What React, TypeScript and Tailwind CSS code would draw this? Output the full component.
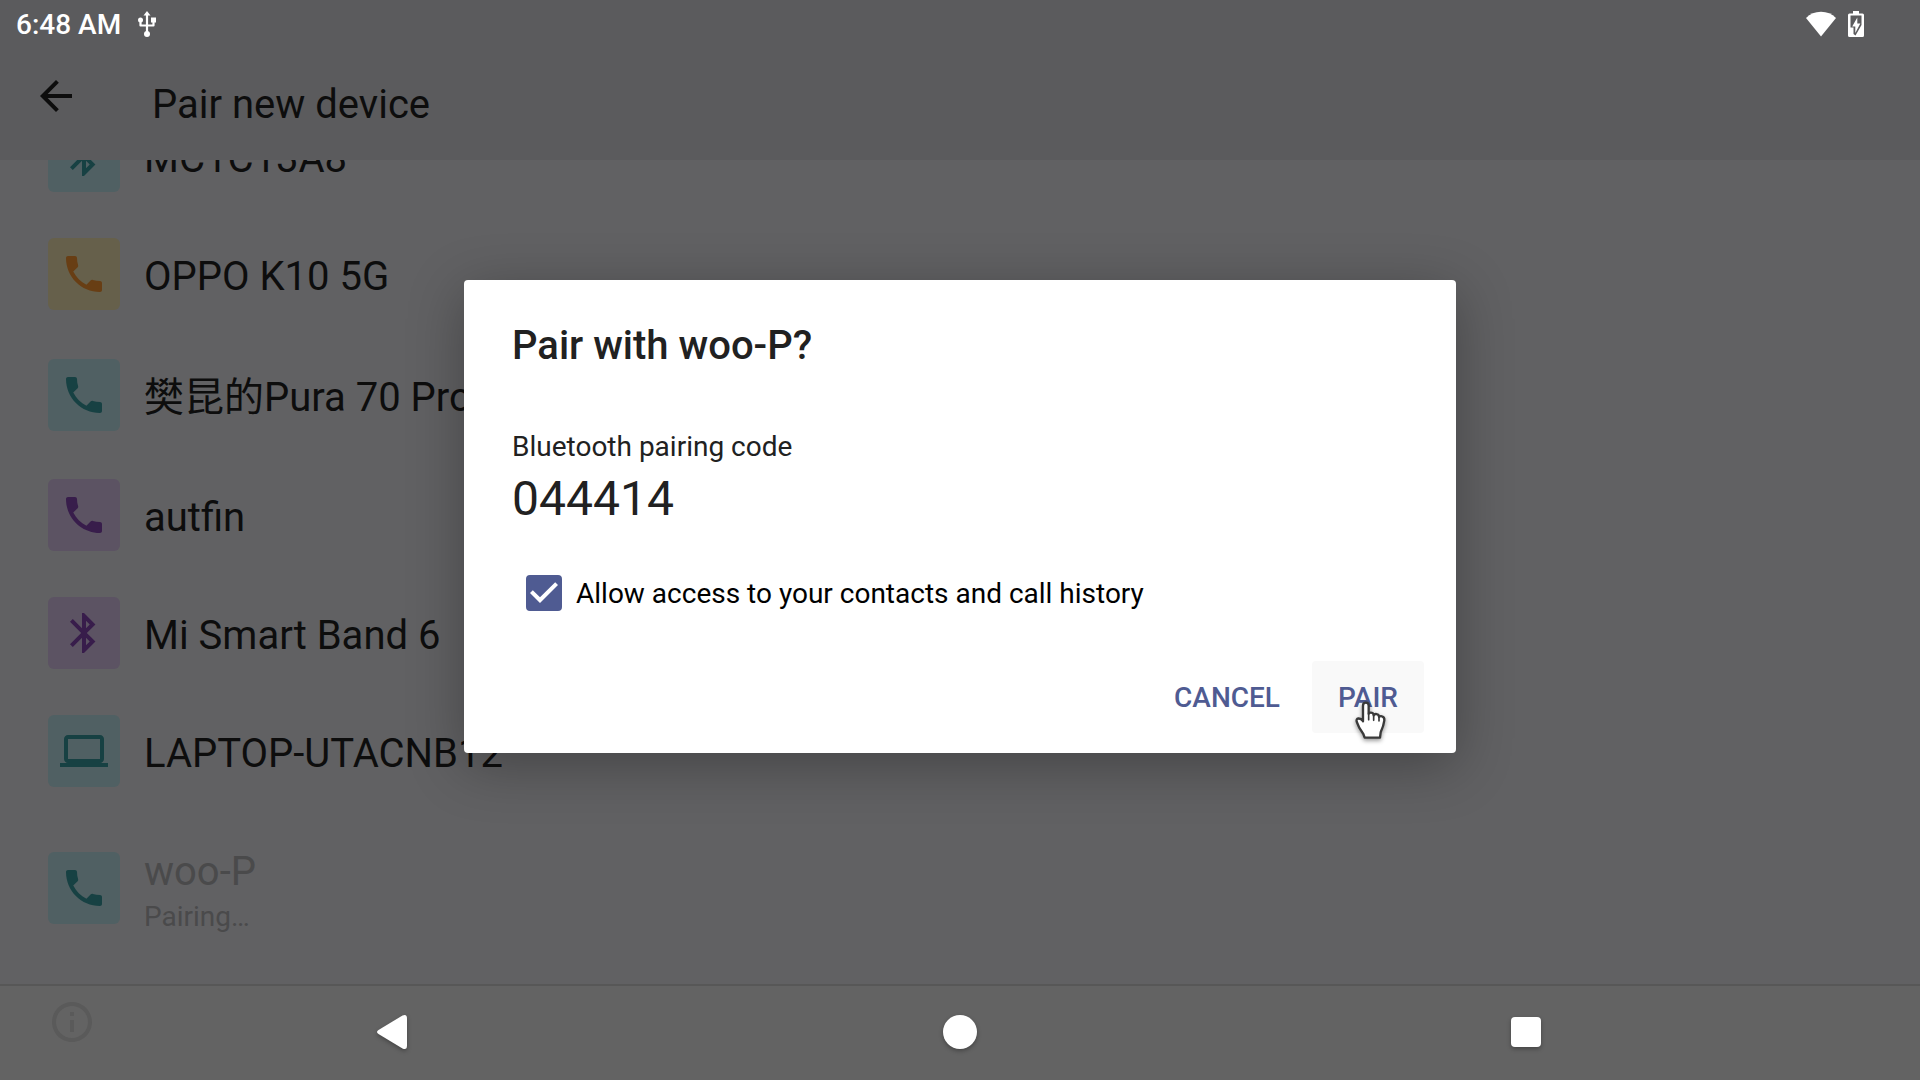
import { useState } from "react";
import type { ReactNode } from "react";
import {
  MdArrowBack,
  MdBluetooth,
  MdInfoOutline,
  MdLaptop,
  MdPhone,
} from "react-icons/md";

type Tone = "teal" | "amber" | "purple";
type Device = {
  name: string;
  kind: "phone" | "bluetooth" | "laptop";
  tone: Tone;
  status?: string;
  cjk?: boolean;
};

const devices: Device[] = [
  { name: "MC1C13A8", kind: "bluetooth", tone: "teal" },
  { name: "OPPO K10 5G", kind: "phone", tone: "amber" },
  { name: "樊昆的Pura 70 Pro", kind: "phone", tone: "teal", cjk: true },
  { name: "autfin", kind: "phone", tone: "purple" },
  { name: "Mi Smart Band 6", kind: "bluetooth", tone: "purple" },
  { name: "LAPTOP-UTACNB12", kind: "laptop", tone: "teal" },
  { name: "woo-P", kind: "phone", tone: "teal", status: "Pairing…" },
];

const tones: Record<Tone, string> = {
  teal: "bg-[#506063] text-[#174143]",
  amber: "bg-[#66604b] text-[#683e14]",
  purple: "bg-[#5c5363] text-[#381d4b]",
};

const icons: Record<Device["kind"], ReactNode> = {
  phone: <MdPhone className="size-12" />,
  bluetooth: <MdBluetooth className="size-12" />,
  laptop: <MdLaptop className="size-12" />,
};

function rowHeight(d: Device) {
  if (d.status) return "h-[156px]";
  return d.cjk ? "h-[123px]" : "h-[118px]";
}

function DeviceRow({ device }: { device: Device }) {
  const pending = Boolean(device.status);
  return (
    <li>
      <button
        type="button"
        disabled={pending}
        className={`flex w-full items-center gap-6 px-12 text-left ${rowHeight(device)}`}
      >
        <span
          className={`flex size-[72px] shrink-0 items-center justify-center rounded-md ${tones[device.tone]}`}
        >
          {icons[device.kind]}
        </span>
        <span className={`flex flex-col pt-1.5 ${pending ? "text-[#4a4a4b]" : "text-[#0d0d0d]"}`}>
          <span className="text-[40px] leading-[48px] whitespace-nowrap">{device.name}</span>
          {device.status && (
            <span className="mt-1 text-[28px] leading-[34px]">{device.status}</span>
          )}
        </span>
      </button>
    </li>
  );
}

function StatusBar() {
  return (
    <div className="flex h-12 items-center justify-between bg-[#5b5b5d] pr-14 pl-4 text-white">
      <div className="flex items-center gap-4">
        <time className="pt-0.5 text-[28px] leading-[34px] font-medium">6:48 AM</time>
        <svg width="20" height="26" viewBox="0 0 20 26" fill="#fff" aria-label="USB connected">
          <path d="M10 0 6.500 4.500h7Z" />
          <path
            d="M10 3v20M3.500 9v5.500h13V9"
            fill="none"
            stroke="#fff"
            strokeWidth="2.200"
            strokeLinejoin="round"
          />
          <circle cx="3.500" cy="9" r="2.500" />
          <rect x="14" y="6.500" width="5" height="5" />
          <circle cx="10" cy="23" r="3" />
        </svg>
      </div>
      <div className="flex items-center gap-3">
        <svg width="30" height="26" viewBox="0 0 30 26" fill="currentColor" aria-label="Wi-Fi">
          <path d="M15 25.5 0 7C4 3 9 .8 15 .8S26 3 30 7Z" />
        </svg>
        <svg width="16" height="26" viewBox="0 0 16 26" aria-label="Battery charging">
          <path
            d="M5 0h6v2.5h3.5A1.5 1.5 0 0 1 16 4v20.500a1.500 1.500 0 0 1-1.500 1.500h-13A1.500 1.500 0 0 1 0 24.500V4a1.500 1.500 0 0 1 1.500-1.500H5Z"
            fill="#fff"
          />
          <path d="M2.500 4.500h11v9.500L7.500 24.500 5.500 23v-6.500h-3Z" fill="#5b5b5d" />
          <path d="M9.300 6.500v6h3L7.300 22v-6.500H4.200Z" fill="#fff" />
        </svg>
      </div>
    </div>
  );
}

function HandCursor() {
  return (
    <svg
      className="pointer-events-none absolute top-[37px] left-[38px] drop-shadow-[0_2px_2px_rgba(0,0,0,0.4)]"
      width="42"
      height="45"
      viewBox="630 170 126 135"
      aria-hidden="true"
    >
      <path
        d="M669 240V193q0-9 8.500-9t8.500 9v24q2-4 8-3 7 1 7 8 3-5 9-3.500 7 1.500 7 8 4-3 9-1.500 8 2 7 12-2 16-11 36l-2 16h-46l-4-11q-14-18-20-37-2-8 5-9.500 8-1 14 8Z"
        fill="#fff"
        stroke="#3a3a3a"
        strokeWidth="7"
        strokeLinejoin="round"
      />
      <path d="M686 215v20M701 220v17M717 225v14" stroke="#3a3a3a" strokeWidth="5" strokeLinecap="round" />
    </svg>
  );
}

function PairDialog() {
  const [allowed, setAllowed] = useState(true);
  return (
    <section
      role="dialog"
      aria-modal="true"
      aria-labelledby="pair-title"
      className="w-[992px] rounded-sm bg-white px-12 pt-[42px] pb-5 text-[#212121] shadow-[0_12px_56px_rgba(0,0,0,0.3)]"
    >
      <h2 id="pair-title" className="text-[40px] leading-[48px] font-medium">
        Pair with woo-P?
      </h2>
      <p className="mt-[59px] text-[28px] leading-9">Bluetooth pairing code</p>
      <p className="mt-1.5 text-[48px] leading-14">044414</p>
      <label className="mt-12 flex h-9 items-center gap-3.5 pl-3.5 text-[28px] leading-9 text-black">
        <span className="grid size-9 shrink-0">
          <input
            type="checkbox"
            checked={allowed}
            onChange={(e) => setAllowed(e.target.checked)}
            className="col-start-1 row-start-1 size-9 appearance-none rounded-sm border-4 border-[#4f5b92] checked:bg-[#4f5b92]"
          />
          {allowed && (
            <svg
              className="pointer-events-none col-start-1 row-start-1 size-9"
              viewBox="3 3 18 18"
              fill="#fff"
              aria-hidden="true"
            >
              <path d="M10 17l-5-5 1.410-1.410L10 14.170l7.590-7.590L19 8l-9 9z" />
            </svg>
          )}
        </span>
        <span className="pt-0.5">Allow access to your contacts and call history</span>
      </label>
      <div className="-mr-4 mt-[50px] flex justify-end gap-2 text-[28px] leading-9 font-medium text-[#4f5b92]">
        <button type="button" className="h-[72px] rounded px-6 pt-0.5">
          CANCEL
        </button>
        <button type="button" className="relative h-[72px] w-28 rounded bg-[#f9f9f9] pt-0.5">
          PAIR
          <HandCursor />
        </button>
      </div>
    </section>
  );
}

function NavButton({ label, children }: { label: string; children: ReactNode }) {
  return (
    <button type="button" aria-label={label} className="flex flex-1 items-center justify-center">
      <svg
        className="drop-shadow-[0_2px_2px_rgba(0,0,0,0.3)]"
        width="40"
        height="40"
        viewBox="0 0 40 40"
        fill="#fff"
      >
        {children}
      </svg>
    </button>
  );
}

export default function App() {
  return (
    <div className="relative flex h-screen flex-col overflow-hidden bg-[#616163] font-[Roboto,'Noto_Sans_CJK_SC',sans-serif]">
      <StatusBar />
      <header className="flex h-28 shrink-0 items-center bg-[#5b5b5d] text-[#0d0d0d]">
        <button
          type="button"
          aria-label="Back"
          className="flex h-24 w-28 items-center justify-center self-start"
        >
          <MdArrowBack className="size-12" />
        </button>
        <h1 className="ml-10 pt-0.5 text-[40px] leading-[48px]">Pair new device</h1>
      </header>

      <main className="min-h-0 flex-1 overflow-hidden">
        <ul className="-mt-[63px]">
          {devices.map((d) => (
            <DeviceRow key={d.name} device={d} />
          ))}
        </ul>
      </main>

      <footer className="flex h-24 shrink-0 border-t-2 border-[#575757] bg-[#636363]">
        <div className="flex w-27 justify-end pt-3 pr-3">
          <MdInfoOutline className="size-12 text-[#5a5a5a]" />
        </div>
        <nav className="flex flex-1">
          <NavButton label="Back">
            <path d="M30.500 2.500q4.500-2 4.500 3v27q0 5-4.500 3L6.500 21q-3-2 0-4Z" />
          </NavButton>
          <NavButton label="Home">
            <circle cx="20" cy="19" r="17" />
          </NavButton>
          <NavButton label="Recent apps">
            <rect x="3" y="4" width="30" height="30" rx="4" />
          </NavButton>
        </nav>
        <div className="w-27" />
      </footer>

      <div className="absolute inset-x-0 top-12 bottom-24 flex items-center justify-center">
        <PairDialog />
      </div>
    </div>
  );
}
